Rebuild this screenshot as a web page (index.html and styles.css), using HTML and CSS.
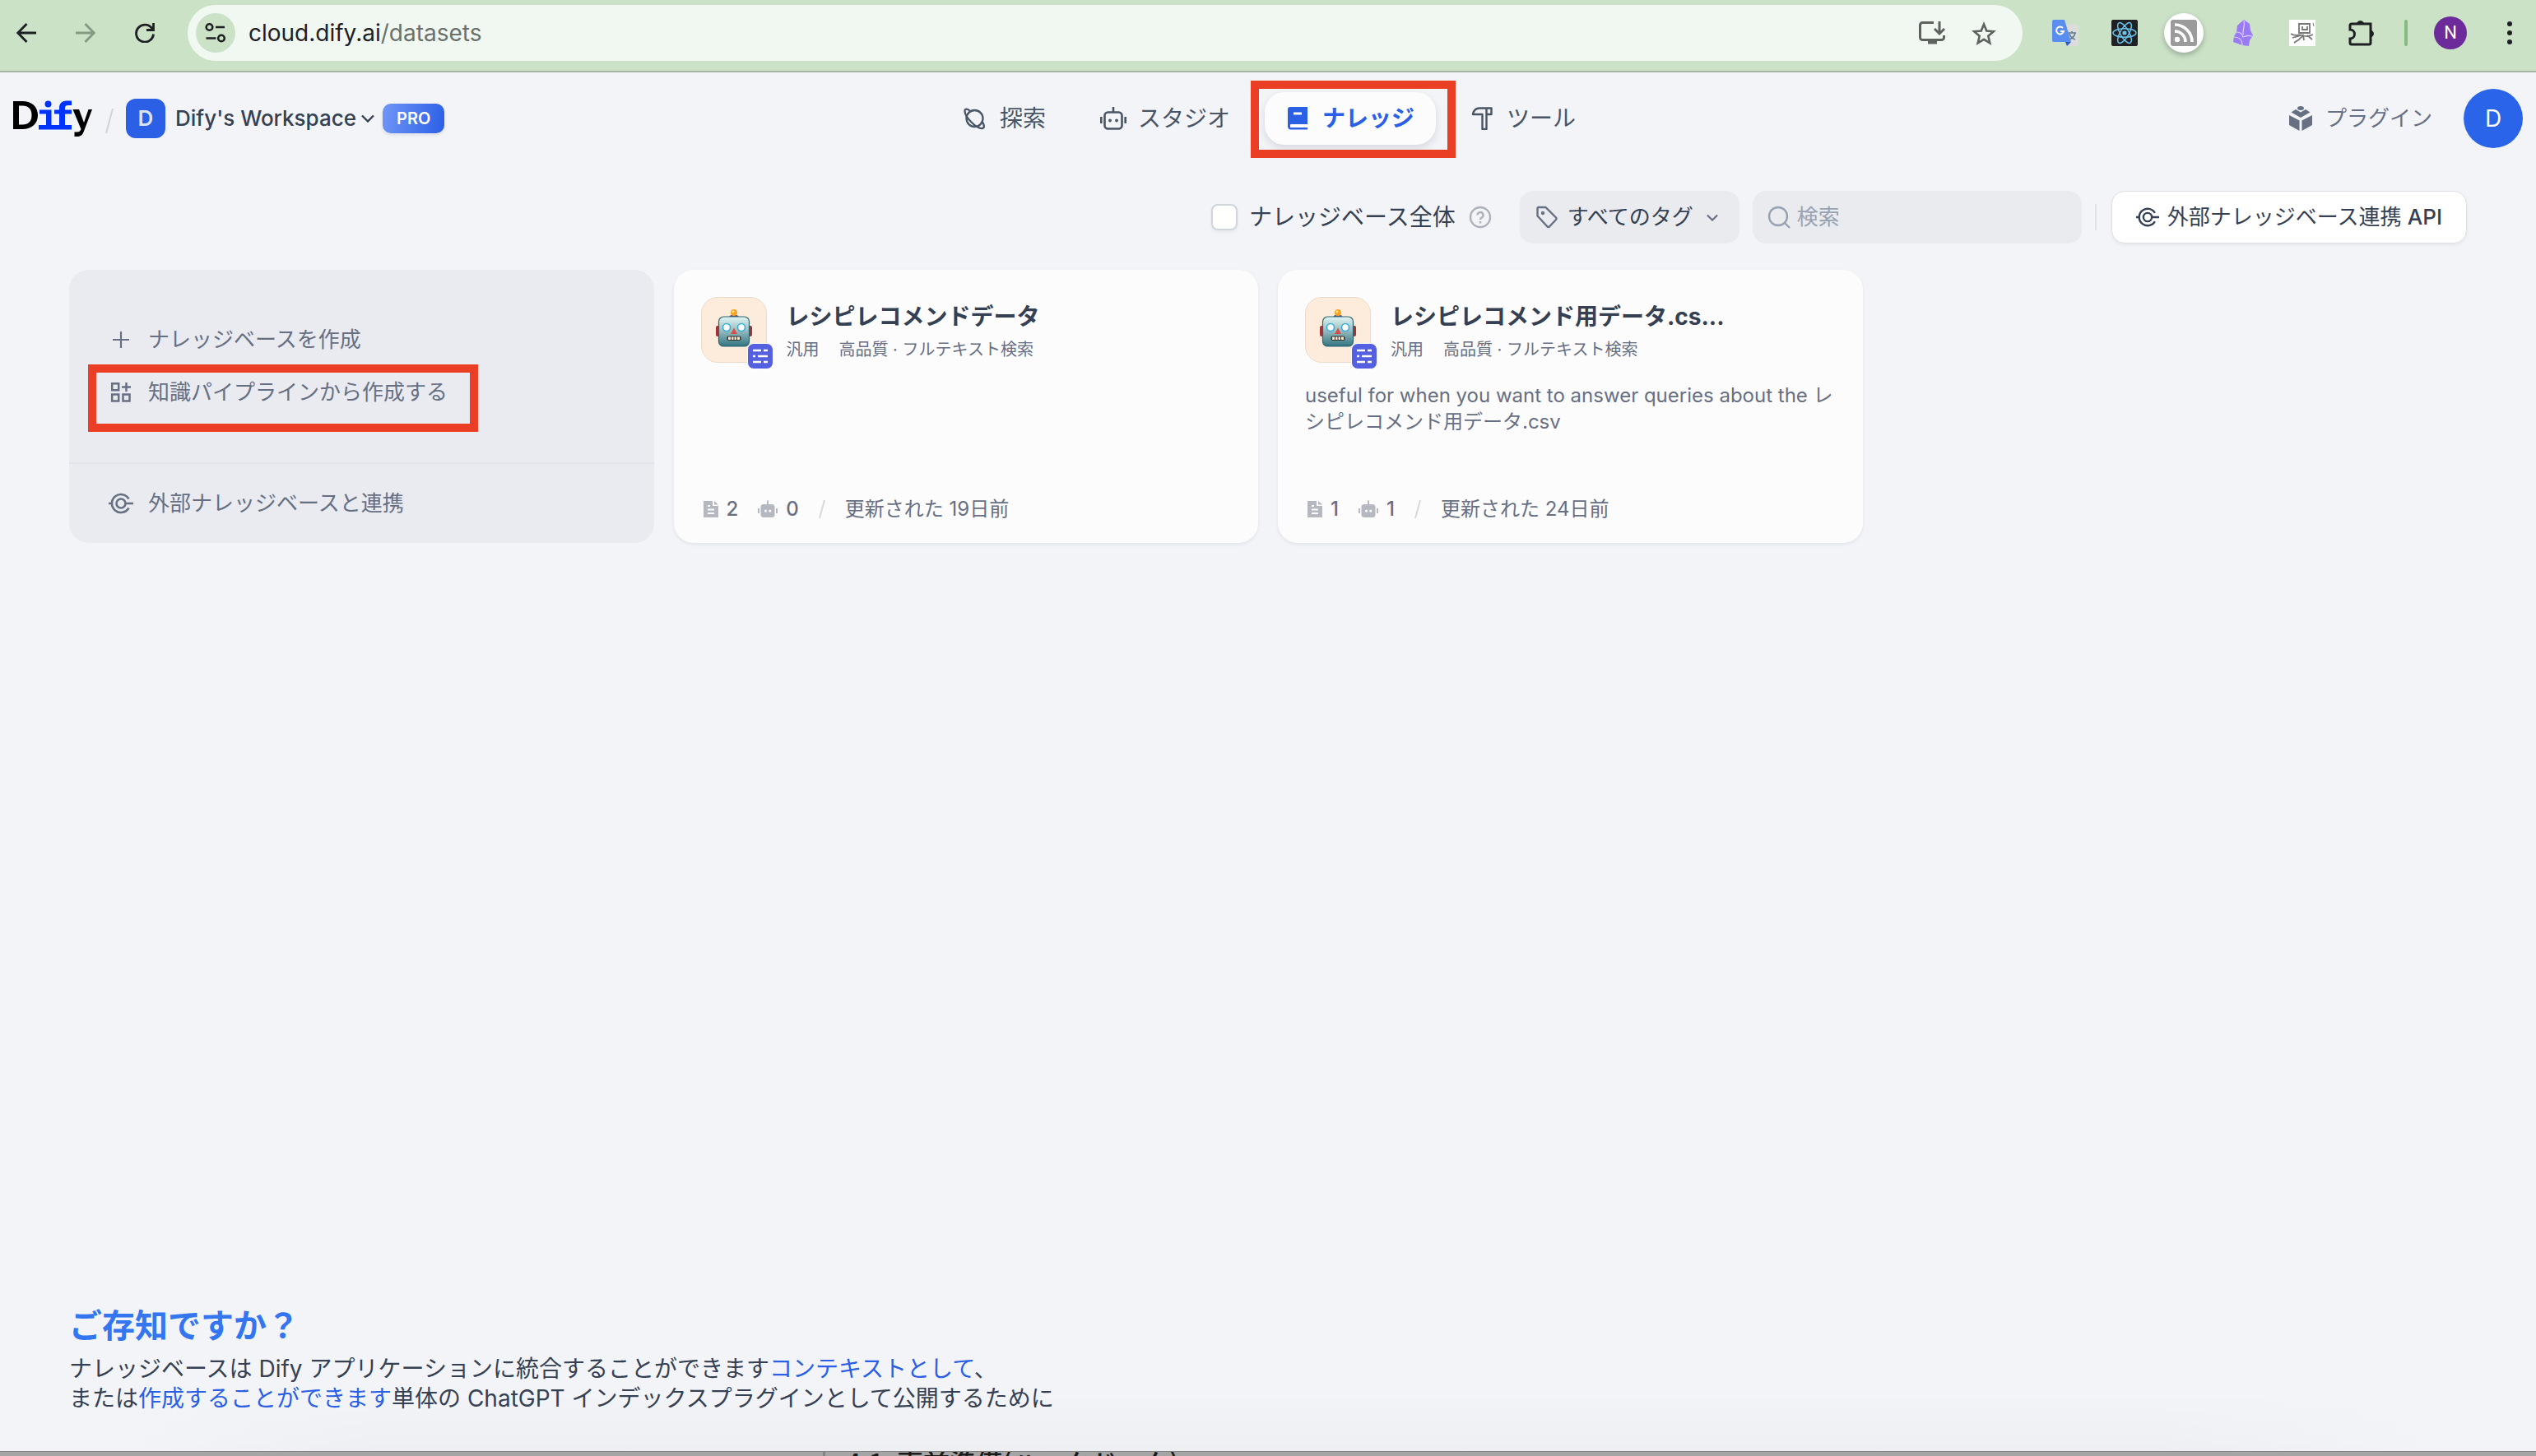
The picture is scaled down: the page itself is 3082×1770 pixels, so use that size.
FILE: index.html
```html
<!DOCTYPE html>
<html lang="ja">
<head>
<meta charset="utf-8">
<title>ナレッジ - Dify</title>
<link rel="stylesheet" href="styles.css">
</head>
<body>
<svg class="defs" aria-hidden="true">
  <symbol id="robot" viewBox="0 0 32 28"><g fill="none" stroke="currentColor" stroke-width="2.600"><rect x="5.500" y="6.500" width="21" height="20" rx="4"/><path d="M16 0v6M1.300 12v8M30.700 12v8"/></g><circle cx="12" cy="16.500" r="1.900" fill="currentColor"/><circle cx="20" cy="16.500" r="1.900" fill="currentColor"/></symbol>
  <symbol id="robot-fill" viewBox="0 0 24 24"><path fill-rule="evenodd" d="M13 6V1.500h-2V6H7A3.500 3.500 0 0 0 3.500 9.500v9A3.500 3.500 0 0 0 7 22h10a3.500 3.500 0 0 0 3.500-3.500v-9A3.500 3.500 0 0 0 17 6zM0 11h2v6H0zM22 11h2v6h-2zM9.500 12.500a1.600 1.600 0 1 0 0 3.200 1.600 1.600 0 0 0 0-3.200zM14.800 12.500a1.600 1.600 0 1 0 0 3.200 1.600 1.600 0 0 0 0-3.200z"/></symbol>
  <symbol id="doc" viewBox="0 0 18 20"><path fill-rule="evenodd" d="M0 0h11v6h7v14H0zM13 0l5 4.500h-5zM5 5v2h3V5zM5 9.500v2h8v-2zM5 14v2h8v-2z"/></symbol>
  <symbol id="link-api" viewBox="0 0 30 30"><g fill="none" stroke="currentColor" stroke-width="2.600"><path d="M24.500 9.500A11 11 0 1 0 24.500 20.500M0 15h4M20 15h10"/><circle cx="15" cy="15" r="5.500"/></g></symbol>
  <symbol id="chevron" viewBox="0 0 16 10"><path d="M1 1.500l7 7 7-7" fill="none" stroke="currentColor" stroke-width="2.400"/></symbol>
  <symbol id="bot-face" viewBox="0 0 44 46">
    <rect x="0" y="20" width="5" height="13" rx="2" fill="#a43237"/><rect x="39" y="20" width="5" height="13" rx="2" fill="#a43237"/>
    <ellipse cx="22" cy="9" rx="5.500" ry="2.500" fill="#5b4a7c"/><circle cx="22" cy="4" r="4" fill="#f5a524"/><circle cx="21" cy="2.800" r="1.500" fill="#ffe08a"/>
    <rect x="3.500" y="9" width="37" height="36" rx="6" fill="url(#bot-skin)" stroke="#2f6670" stroke-width="1.200"/>
    <circle cx="13" cy="22" r="5.300" fill="#35aede"/><circle cx="31" cy="22" r="5.300" fill="#35aede"/><circle cx="13" cy="22" r="3.700" fill="#fff"/><circle cx="31" cy="22" r="3.700" fill="#fff"/>
    <path d="M22 22.500l4 7.500h-8z" fill="#d6504a"/><rect x="13.500" y="32.500" width="17" height="5.500" rx="2" fill="#3a2f2a"/><path d="M15 33.500h3v3.500h-3zM19 33.500h2.500v3.500H19zM22.500 33.500H25v3.500h-2.500zM26 33.500h3v3.500h-3z" fill="#f5ecd8"/>
  </symbol>
  <linearGradient id="bot-skin" x1="0" y1="0" x2="0" y2="1"><stop offset="0" stop-color="#dff5f3"/><stop offset=".45" stop-color="#9dbfc2"/><stop offset="1" stop-color="#2f7482"/></linearGradient>
</svg>

<header class="browser">
  <button class="tool" aria-label="戻る"><svg width="24" height="24" viewBox="0 0 24 24"><path d="M12.500 1L1.800 12l10.700 11M2 12h22" fill="none" stroke="#1f2023" stroke-width="2.800"/></svg></button>
  <button class="tool" aria-label="進む"><svg width="24" height="24" viewBox="0 0 24 24"><path d="M11.500 1l10.700 11-10.700 11M22 12H0" fill="none" stroke="#879985" stroke-width="2.800"/></svg></button>
  <button class="tool" aria-label="再読み込み"><svg width="24" height="24" viewBox="0 0 24 24"><path d="M21.500 8A10.500 10.500 0 1 0 22.500 13.500" fill="none" stroke="#1f2023" stroke-width="2.800"/><path d="M22.500 0v8.500H14" fill="none" stroke="#1f2023" stroke-width="2.800"/></svg></button>
  <div class="omnibox">
    <button class="site-info" aria-label="サイト情報"><svg width="26" height="26" viewBox="0 0 26 26" fill="none" stroke="#1f2023" stroke-width="2.600"><circle cx="5.500" cy="6" r="3.800"/><circle cx="20" cy="19.500" r="3.800"/><path d="M13 6h11M1.500 19.500h12"/></svg></button>
    <span class="url">cloud.dify.ai<span class="path">/datasets</span></span>
    <button class="tool" aria-label="インストール"><svg width="32" height="28" viewBox="0 0 32 28" fill="none" stroke="#5d625e" stroke-width="3"><path d="M18 1.500H4.500a3 3 0 0 0-3 3v15a3 3 0 0 0 3 3h23a3 3 0 0 0 3-3V17"/><path d="M11 25.500h11" stroke-width="4"/><path d="M25 0v14M19 9l6 6 6-6"/></svg></button>
    <button class="tool" aria-label="ブックマーク"><svg width="30" height="29" viewBox="0 0 30 29"><path d="M15 3.500l3.300 8 8.600.7-6.600 5.600 2 8.500-7.300-4.500-7.300 4.500 2-8.500-6.600-5.600 8.600-.7z" fill="none" stroke="#5d625e" stroke-width="2.600"/></svg></button>
  </div>
  <div class="extensions">
    <button class="ext" aria-label="翻訳"><svg width="32" height="32" viewBox="0 0 32 32"><path d="M14 6h16a2 2 0 0 1 2 2v22a2 2 0 0 1-2 2H18z" fill="#dcdcdc"/><path d="M19 16h10M24 14v2M28 16c-1 4-4 7-7 8M21 17c1 3 4 6 7 7" stroke="#5f7f8f" stroke-width="1.600" fill="none"/><path d="M16 27h7l-5 5z" fill="#2f5bc4"/><path d="M2 0h13l8 27H2a2 2 0 0 1-2-2V2a2 2 0 0 1 2-2z" fill="#5a8df0"/><path d="M13 10a4.500 4.500 0 1 0 1 4h-4" fill="none" stroke="#fff" stroke-width="2"/></svg></button>
    <button class="ext" aria-label="React"><svg width="32" height="32" viewBox="0 0 32 32"><rect width="32" height="32" rx="2" fill="#202124"/><g fill="none" stroke="#6cc5ec" stroke-width="1.500"><ellipse cx="16" cy="16" rx="14" ry="5.200"/><ellipse cx="16" cy="16" rx="14" ry="5.200" transform="rotate(60 16 16)"/><ellipse cx="16" cy="16" rx="14" ry="5.200" transform="rotate(120 16 16)"/></g><circle cx="16" cy="16" r="2.600" fill="#6cc5ec"/></svg></button>
    <button class="ext ext-round" aria-label="RSS"><svg width="32" height="32" viewBox="0 0 32 32"><rect width="32" height="32" rx="3" fill="#9b9b9b"/><g fill="none" stroke="#fff" stroke-width="3.600"><path d="M5 6a21 21 0 0 1 21 21M5 14a13 13 0 0 1 13 13"/></g><circle cx="8" cy="24" r="3.200" fill="#fff"/></svg></button>
    <button class="ext" aria-label="Obsidian"><svg width="32" height="32" viewBox="0 0 32 32"><path d="M17 0l7 5 1 8 3 6-4 6-1 7-8-1-11-4 1-7 3-5 1-8z" fill="#9b7bf5"/><path d="M17 1c2 7-2 10-1 17M8 15c5 0 7 2 8 6 4-2 7-2 11-1M5 21c6 0 10 3 10 10" fill="none" stroke="#dcd0ff" stroke-width="1.200"/></svg></button>
    <button class="ext" aria-label="メモ"><svg width="32" height="32" viewBox="0 0 32 32"><rect width="32" height="32" fill="#fff"/><g fill="none" stroke="#777" stroke-width="1.800"><path d="M12 5h13v11H12zM16 8v4h6V8M2 17c6 4 9 0 14 2s8 1 13-1M4 22l10-3M6 28l6-4 5-5 1 6M22 19l6 5"/><path d="M29 4l1 4" stroke-width="1"/></g></svg></button>
    <button class="ext" aria-label="拡張機能"><svg width="32" height="34" viewBox="0 0 32 34"><path d="M4 6h23v23a2 2 0 0 1-2 2H4a2 2 0 0 1-2-2v-5a5.500 5.500 0 0 0 0-11V8a2 2 0 0 1 2-2z" fill="none" stroke="#1f2023" stroke-width="3"/><path d="M10.500 5a4.500 4.500 0 0 1 8 0zM28 14a4.500 4.500 0 0 1 0 8z" fill="#1f2023" stroke="#1f2023"/></svg></button>
  </div>
  <span class="bar"></span>
  <button class="profile">N</button>
  <button class="tool" aria-label="メニュー"><svg width="8" height="28" viewBox="0 0 8 28" fill="#1f2023"><circle cx="4" cy="3" r="3"/><circle cx="4" cy="14" r="3"/><circle cx="4" cy="25" r="3"/></svg></button>
</header>

<div class="app">
  <header class="topbar">
    <div class="brand">
      <a class="logo" href="#" aria-label="Dify"><svg width="96" height="44" viewBox="0 0 96 44"><path fill-rule="evenodd" d="M0 1h11c12 0 19 7 19 17s-7 17-19 17H0zM7 6.500v23h4.500c7 0 11-4 11-11.500s-4-11.500-11-11.500z"/><path d="M72.500 11h7.500l6 16 5.500-16H96L86.500 36c-2 6-4 8-9 8h-3v-5.500h3c3 0 4-1 5-3.500z"/><g fill="#0033ff"><circle cx="42.500" cy="4.500" r="4"/><path d="M32 11.500h14.500V30H56V16.500h-6v-5h6V9c0-6 4-8.500 10-8.500h5V6h-4c-3 0-4 1-4 3.500v2h8v5h-8V30h8v5.500H31V30h9V16.500h-8z"/></g></svg></a>
      <svg class="slash" width="10" height="30" viewBox="0 0 10 30"><path d="M9 0L1 30" stroke="#d0d3da" stroke-width="2"/></svg>
      <button class="workspace"><span class="ws-icon">D</span><span>Dify's Workspace</span><svg width="16" height="10"><use href="#chevron"/></svg></button>
      <span class="plan">PRO</span>
    </div>
    <nav class="nav">
      <a href="#" class="nav-item"><svg width="28" height="28" viewBox="0 0 28 28" fill="none" stroke="currentColor" stroke-width="2.300"><circle cx="13.500" cy="14" r="10"/><path d="M8 5C5 2 1.500 1.500 1.500 5c0 4 4 9.500 8 13.500s10 8 13.500 7.500c3-.5 2-4.500 0-7.500"/></svg>探索</a>
      <a href="#" class="nav-item"><svg class="wide" width="32" height="28"><use href="#robot"/></svg>スタジオ</a>
      <a href="#" class="nav-item active"><svg width="28" height="28" viewBox="0 0 28 28" fill="currentColor"><path fill-rule="evenodd" d="M5 0h21v21H6a1.500 1.500 0 0 0-1 .4V25h21v2.500H6a4 4 0 0 1-4-4V3a3 3 0 0 1 3-3zM9 6.500v3h10v-3z"/></svg>ナレッジ</a>
      <a href="#" class="nav-item"><svg width="28" height="28" viewBox="0 0 28 28" fill="none" stroke="currentColor" stroke-width="2.400" stroke-linejoin="round"><path d="M3 8.500c1-4 4-7 8-7H25.500v7.500h-6V27h-5V9H3zM19.500 1.500V9"/></svg>ツール</a>
    </nav>
    <div class="account">
      <a href="#" class="plugins"><svg width="28" height="30" viewBox="0 0 28 30" fill="#676f83"><ellipse cx="14" cy="2.600" rx="4" ry="2.500"/><path d="M8 4l6 3.500L20 4l5.500 3.500L14 14 2.500 7.500zM0 11l12.500 6.500V30L0 23zM28 11l-12.500 6.500V30L28 23z"/></svg>プラグイン</a>
      <button class="avatar">D</button>
    </div>
  </header>

  <main class="content">
    <div class="filters">
      <label class="all"><input type="checkbox">ナレッジベース全体</label>
      <svg class="help" width="28" height="28" viewBox="0 0 28 28" fill="none" stroke="#aeb1b9" stroke-width="2.400"><circle cx="14" cy="14" r="12"/><path d="M10.500 11.500a3.500 3.500 0 1 1 5 3.200c-1 .5-1.500 1-1.500 2.300M14 19v2.500"/></svg>
      <button class="tags"><svg width="26" height="28" viewBox="0 0 26 28" fill="none" stroke="#676f83" stroke-width="2.400" stroke-linejoin="round"><path d="M3 2h8.500L24 14.500a2 2 0 0 1 0 2.500l-8 8.500a2 2 0 0 1-2.500 0L1.500 12.500V3.500A1.500 1.500 0 0 1 3 2z"/><circle cx="8" cy="9" r="1" /></svg><span>すべてのタグ</span><svg width="14" height="9"><use href="#chevron"/></svg></button>
      <div class="search"><svg width="28" height="28" viewBox="0 0 28 28" fill="none" stroke="#98a2b2" stroke-width="2.400"><circle cx="13" cy="13" r="11"/><path d="M21 21l6 6"/></svg><input type="text" placeholder="検索" aria-label="検索"></div>
      <span class="divider"></span>
      <button class="api"><svg width="28" height="28"><use href="#link-api"/></svg><span>外部ナレッジベース連携 <b>API</b></span></button>
    </div>

    <div class="grid">
      <section class="create">
        <div class="create-main">
          <a href="#" class="create-row"><svg width="30" height="30" viewBox="0 0 30 30"><path d="M15 5v20M5 15h20" stroke="currentColor" stroke-width="2.200"/></svg>ナレッジベースを作成</a>
          <a href="#" class="create-row marked"><svg width="30" height="30" viewBox="0 0 30 30" fill="none" stroke="currentColor" stroke-width="2.500"><path d="M4.200 4.200h8v8h-8zM4.200 17.500h8v8h-8zM17.500 17.500h8v8h-8zM21.500 3v11M16 8.500h11"/></svg>知識パイプラインから作成する</a>
        </div>
        <div class="create-foot"><a href="#" class="create-row"><svg width="30" height="30"><use href="#link-api"/></svg>外部ナレッジベースと連携</a></div>
      </section>

      <article class="card">
        <div class="card-head">
          <div class="card-icon"><svg width="44" height="46"><use href="#bot-face"/></svg><span class="badge"><svg width="20" height="18" viewBox="0 0 20 18" stroke="#fff" stroke-width="2.600"><path d="M1 2h10M14 2h5M1 9h3M7 9h12M1 16h10M14 16h5"/></svg></span></div>
          <div class="card-title"><h2>レシピレコメンドデータ</h2><p><span>汎用</span><span>高品質 · フルテキスト検索</span></p></div>
        </div>
        <p class="desc"></p>
        <footer class="card-foot"><span class="stat"><svg width="18" height="20"><use href="#doc"/></svg>2</span><span class="stat"><svg width="24" height="24"><use href="#robot-fill"/></svg>0</span><svg width="8" height="22" viewBox="0 0 8 22"><path d="M7 0L1 22" stroke="#d6d8de" stroke-width="2"/></svg><span>更新された 19日前</span></footer>
      </article>

      <article class="card">
        <div class="card-head">
          <div class="card-icon"><svg width="44" height="46"><use href="#bot-face"/></svg><span class="badge"><svg width="20" height="18" viewBox="0 0 20 18" stroke="#fff" stroke-width="2.600"><path d="M1 2h10M14 2h5M1 9h3M7 9h12M1 16h10M14 16h5"/></svg></span></div>
          <div class="card-title"><h2>レシピレコメンド用データ.cs...</h2><p><span>汎用</span><span>高品質 · フルテキスト検索</span></p></div>
        </div>
        <p class="desc">useful for when you want to answer queries about the レシピレコメンド用データ.csv</p>
        <footer class="card-foot"><span class="stat"><svg width="18" height="20"><use href="#doc"/></svg>1</span><span class="stat"><svg width="24" height="24"><use href="#robot-fill"/></svg>1</span><svg width="8" height="22" viewBox="0 0 8 22"><path d="M7 0L1 22" stroke="#d6d8de" stroke-width="2"/></svg><span>更新された 24日前</span></footer>
      </article>
    </div>
  </main>

  <footer class="about">
    <h3>ご存知ですか？</h3>
    <p>ナレッジベースは Dify アプリケーションに統合することができます<a href="#">コンテキストとして</a>、<br>または<a href="#">作成することができます</a>単体の ChatGPT インデックスプラグインとして公開するために</p>
  </footer>
</div>
<div class="behind"><span>4.1</span><span>事前準備(ハックドック)</span></div>
</body>
</html>
```
FILE: styles.css
```css
* { box-sizing: border-box; }
body {
  margin: 0;
  height: 100vh;
  display: flex;
  flex-direction: column;
  overflow: hidden;
  background: #f2f4f8;
  color: #354052;
  font: 26px/36px Inter, "Noto Sans CJK JP", sans-serif;
}
button { border: 0; padding: 0; background: none; font: inherit; color: inherit; }
a { color: inherit; text-decoration: none; }
h2, h3, p { margin: 0; }
svg { display: block; flex: none; }
.defs { position: absolute; width: 0; height: 0; }

/* Browser toolbar */
.browser {
  flex: none;
  display: flex;
  align-items: center;
  height: 88px;
  padding: 0 28px 6px 20px;
  background: #cbe2c7;
  border-bottom: 2px solid #a5b5a3;
}
.browser > .tool { margin-right: 48px; }
.browser > .tool:last-child { margin: 0 0 0 48px; }
.omnibox {
  flex: 1;
  display: flex;
  align-items: center;
  height: 68px;
  margin-left: -8px;
  padding: 0 32px 0 10px;
  border-radius: 34px;
  background: #f1f8f1;
}
.site-info {
  display: grid;
  place-items: center;
  width: 48px;
  height: 48px;
  border-radius: 50%;
  background: #cbe2c7;
}
.url { flex: 1; margin-left: 16px; color: #1f2023; font-size: 28px; }
.url .path { color: #6a706b; }
.omnibox .tool + .tool { margin-left: 32px; }
.extensions { display: flex; align-items: center; gap: 40px; margin-left: 36px; }
.ext-round {
  margin: 0 -8px;
  padding: 8px;
  border-radius: 50%;
  background: #fff;
  box-shadow: 0 3px 6px rgba(0, 0, 0, .25);
}
.bar { width: 4px; height: 32px; margin: 0 32px 0 36px; border-radius: 2px; background: #86ba7f; }
.profile { width: 40px; height: 40px; border-radius: 50%; background: #6d2a9a; color: #fff; font: 22px/40px Roboto, sans-serif; }

/* Application header */
.app { flex: 1; min-height: 0; display: flex; flex-direction: column; }
.topbar {
  display: grid;
  grid-template-columns: 1fr auto 1fr;
  align-items: center;
  height: 112px;
  padding: 0 16px;
}
.brand, .workspace, .nav, .nav-item, .account, .plugins { display: flex; align-items: center; }
.slash { margin: 6px 15px 0 16px; }
.workspace { gap: 6px; font-weight: 500; }
.ws-icon {
  width: 48px;
  height: 48px;
  margin-right: 6px;
  border-radius: 12px;
  background: #2a5fe6;
  color: #d9e3fb;
  font-size: 26px;
  font-weight: 600;
  line-height: 48px;
  text-align: center;
}
.plan {
  height: 36px;
  margin-left: 10px;
  padding: 0 17px;
  border-radius: 10px;
  background: linear-gradient(100deg, #7096f7, #2a5fe6);
  box-shadow: 0 2px 4px rgba(16, 24, 40, .1);
  color: #fff;
  font-size: 20px;
  font-weight: 600;
}
.nav { gap: 16px; margin-left: 4px; }
.nav-item { gap: 16px; height: 64px; padding: 0 26px; border-radius: 24px; color: #495464; font-size: 28px; }
.nav-item .wide { margin: 0 -2px; }
.nav-item.active {
  position: relative;
  background: #fcfcfd;
  box-shadow: 0 4px 10px rgba(16, 24, 40, .12);
  color: #2a5fe6;
  font-weight: 700;
}
.nav-item.active::before, .marked::before {
  content: "";
  position: absolute;
  border: 10px solid #eb3f25;
}
.nav-item.active::before { inset: -14px -24px -16px -17px; }
.account { justify-content: flex-end; gap: 38px; }
.plugins { gap: 16px; color: #676f83; }
.avatar { width: 72px; height: 72px; border-radius: 50%; background: #2a64e8; color: #fff; font-size: 28px; }

/* Filters */
.content { flex: 1; padding: 32px 84px 0; }
.filters { display: flex; align-items: center; justify-content: flex-end; height: 64px; }
.all { display: flex; align-items: center; gap: 14px; font-size: 28px; }
.all input {
  appearance: none;
  width: 32px;
  height: 32px;
  margin: 0;
  border: 2px solid #d0d5dd;
  border-radius: 8px;
  background: #fff;
  box-shadow: 0 2px 4px rgba(16, 24, 40, .06);
}
.help { margin: 0 34px 0 16px; }
.tags, .search { display: flex; align-items: center; height: 64px; border-radius: 16px; background: #e9ebef; }
.tags { gap: 12px; padding: 0 26px 0 20px; color: #354052; }
.tags span { margin-right: 4px; }
.tags svg { color: #676f83; }
.search { gap: 8px; width: 400px; margin-left: 16px; padding: 0 18px; }
.search input { flex: 1; min-width: 0; border: 0; padding: 0; background: none; font: inherit; outline: 0; }
.search input::placeholder { color: #98a2b2; opacity: 1; }
.divider { width: 2px; height: 32px; margin: 0 18px 0 16px; background: #e0e2e8; }
.api {
  display: flex;
  align-items: center;
  gap: 10px;
  height: 64px;
  padding: 0 29px;
  border: 1px solid #dfe1e6;
  border-radius: 16px;
  background: #fff;
  box-shadow: 0 2px 4px rgba(16, 24, 40, .06);
}
.api b { font-weight: 500; }

/* Dataset cards */
.grid { display: grid; grid-template-columns: repeat(4, 1fr); gap: 24px; margin-top: 32px; }
.create, .card { display: flex; flex-direction: column; height: 332px; border-radius: 24px; }
.create { background: #e9ebf0; color: #676f83; }
.create-main { flex: 1; display: flex; flex-direction: column; justify-content: center; gap: 28px; padding: 0 48px; }
.create-foot { padding: 30px 48px; border-top: 2px solid #e1e4ea; }
.create-row { display: flex; align-items: center; gap: 18px; }
.marked { position: relative; align-self: flex-start; }
.marked::before { inset: -16px -37px -30px -25px; }
.card { padding: 33px; background: #fcfcfd; box-shadow: 0 2px 4px rgba(16, 24, 40, .07); }
.card-head { display: flex; gap: 24px; }
.card-icon {
  position: relative;
  display: grid;
  place-items: center;
  width: 80px;
  height: 80px;
  padding-bottom: 4px;
  border: 1px solid #eedccb;
  border-radius: 20px;
  background: #fdecdb;
}
.badge {
  position: absolute;
  right: -9px;
  bottom: -9px;
  display: grid;
  place-items: center;
  width: 32px;
  height: 32px;
  border: 1px solid #fcfcfd;
  border-radius: 8px;
  background: #5460e0;
}
.card-title { display: flex; flex-direction: column; gap: 8px; padding-top: 4px; }
.card-title h2 { font-size: 28px; font-weight: 700; line-height: 40px; }
.card-title p { display: flex; gap: 24px; color: #676f83; font-size: 20px; line-height: 24px; }
.desc { flex: 1; padding-top: 24px; color: #676f83; font-size: 24px; line-height: 32px; }
.card-foot { display: flex; align-items: center; gap: 24px; padding-left: 3px; height: 32px; margin-bottom: -8px; color: #676f83; font-size: 24px; }
.stat { display: flex; align-items: center; gap: 10px; font-weight: 500; }
.stat svg { color: #b5b8c1; fill: currentColor; }

/* About */
.about {
  padding: 0 84px 46px;
  background:
    linear-gradient(90deg, #f2f4f8 4%, transparent 15%, transparent 85%, #f2f4f8 97%),
    linear-gradient(#f2f4f8 60%, #edeff3);
  font-size: 28px;
}
.about h3 { margin-bottom: 6px; color: #3376f0; font-size: 40px; font-weight: 700; line-height: 56px; }
.about a { color: #2a5fe6; }

/* Window lying underneath */
.behind {
  flex: none;
  display: flex;
  gap: 16px;
  height: 6px;
  overflow: hidden;
  padding-left: 1028px;
  border-top: 1px solid #838383;
  background: linear-gradient(#858585, #858585) 1000px 0 / 3px 6px no-repeat, #a5a5a5;
  color: #1a1a1a;
  font-family: "Noto Sans CJK JP", sans-serif;
  font-size: 32px;
  font-weight: 500;
  line-height: 24px;
}
```
